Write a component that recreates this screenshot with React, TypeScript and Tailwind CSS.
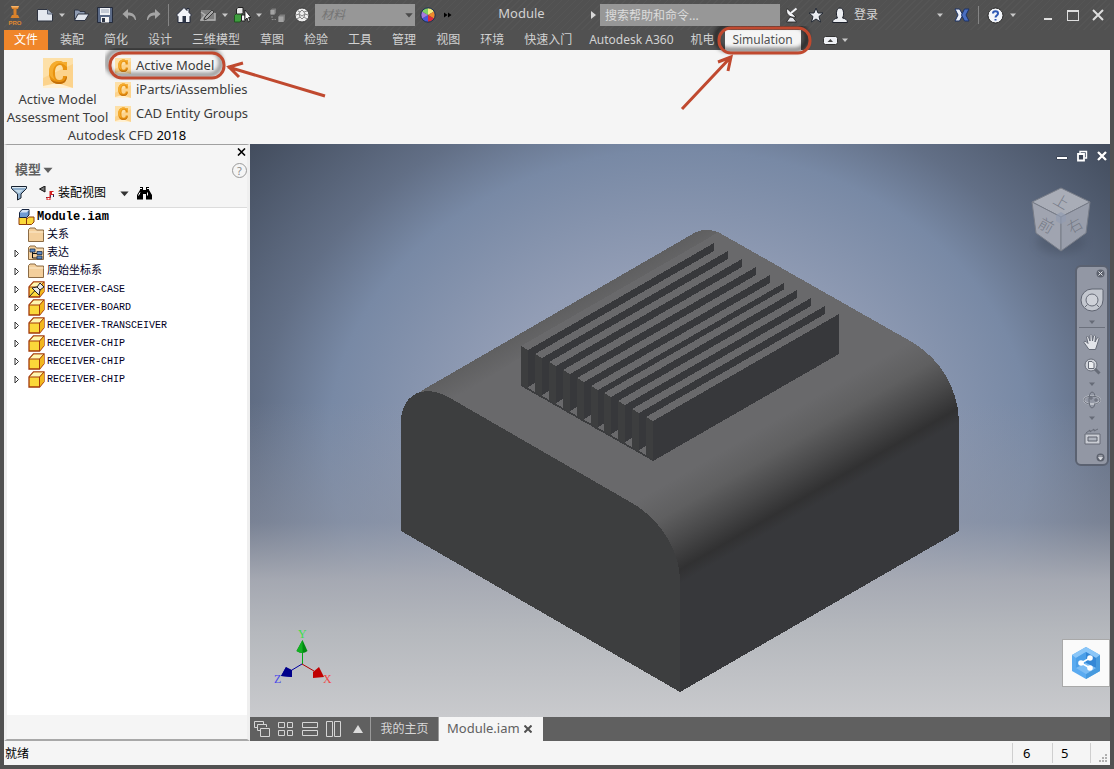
import { ReactNode } from "react";

const HATCH =
  "bg-[repeating-linear-gradient(135deg,#515151_0px,#515151_4px,#555555_4px,#555555_5px)]";

const menuTabs = [
  "装配",
  "简化",
  "设计",
  "三维模型",
  "草图",
  "检验",
  "工具",
  "管理",
  "视图",
  "环境",
  "快速入门",
  "Autodesk A360",
  "机电",
];

interface TreeItem {
  id: number;
  label: string;
  icon: "folder" | "views" | "pinned" | "part";
  expandable: boolean;
}

const treeItems: TreeItem[] = [
  { id: 1, label: "关系", icon: "folder", expandable: false },
  { id: 2, label: "表达", icon: "views", expandable: true },
  { id: 3, label: "原始坐标系", icon: "folder", expandable: true },
  { id: 4, label: "RECEIVER-CASE", icon: "pinned", expandable: true },
  { id: 5, label: "RECEIVER-BOARD", icon: "part", expandable: true },
  { id: 6, label: "RECEIVER-TRANSCEIVER", icon: "part", expandable: true },
  { id: 7, label: "RECEIVER-CHIP", icon: "part", expandable: true },
  { id: 8, label: "RECEIVER-CHIP", icon: "part", expandable: true },
  { id: 9, label: "RECEIVER-CHIP", icon: "part", expandable: true },
];

function Caret({
  size = 8,
  className = "fill-[#c8c8c8]",
}: {
  size?: number;
  className?: string;
}) {
  return (
    <svg width={size} height={size} viewBox="0 0 8 8" className={className}>
      <path d="M1 2.5h6L4 6z" />
    </svg>
  );
}

function ToolButton({
  label,
  className = "",
  children,
}: {
  label: string;
  className?: string;
  children: ReactNode;
}) {
  return (
    <button
      type="button"
      aria-label={label}
      className={`flex h-6 shrink-0 items-center justify-center ${className}`}
    >
      {children}
    </button>
  );
}

function QuickAccess() {
  return (
    <div className="flex items-center gap-0.5">
      <ToolButton label="Inventor" className="w-[22px]">
        <svg width="16" height="22" viewBox="0 0 16 22">
          <path d="M4 2h8l-1 3H9.500v6H11l1.500 3H3.500L5 11h1.500V5H5z" fill="#d9822b" />
          <path d="M4 2h8l-1 1.500H5z" fill="#f7b469" />
          <text x="8" y="21" fontSize="6" textAnchor="middle" fill="#e08a30" fontFamily="Liberation Sans, sans-serif" fontWeight="bold">
            PRO
          </text>
        </svg>
      </ToolButton>
      <ToolButton label="新建" className="ml-1.5 w-[22px]">
        <svg width="16" height="14" viewBox="0 0 16 14">
          <path d="M0.500 1.500h10l5 4.500v7h-15z" fill="#e4e8ef" stroke="#2f3440" />
          <path d="M10.500 1.500v4.500h5" fill="#aab4c4" stroke="#5a6478" />
        </svg>
      </ToolButton>
      <ToolButton label="新建选项" className="w-2">
        <Caret />
      </ToolButton>
      <ToolButton label="打开" className="ml-0.5 w-[22px]">
        <svg width="17" height="14" viewBox="0 0 17 14">
          <path d="M1.500 12V2h4l1.500 1.500h5V6" fill="#8e9bb2" stroke="#2e3442" />
          <path d="M1.500 12.500 5 6h11l-4 6.500z" fill="#dfe4ec" stroke="#2e3442" />
        </svg>
      </ToolButton>
      <ToolButton label="保存" className="w-[22px]">
        <svg width="16" height="16" viewBox="0 0 16 16">
          <path d="M0.500 0.500h15v15h-15z" fill="#5b6a86" stroke="#252b3a" />
          <path d="M3 1h10v7H3z" fill="#eef1f5" />
          <path d="M4 3h8M4 5h8" stroke="#9aa4b5" />
          <path d="M4 10h8v5.500H4z" fill="#f3f3f3" />
          <path d="M5 11h3v4H5z" fill="#2f3747" />
        </svg>
      </ToolButton>
      <ToolButton label="撤消" className="w-[22px]">
        <svg width="15" height="12" viewBox="0 0 15 12">
          <path d="M6 0 0.500 5 6 10V6.500c4 0 5.500 1 7 4.500h1C14 6 11 3.500 6 3.500z" fill="#a5a5a5" />
        </svg>
      </ToolButton>
      <ToolButton label="恢复" className="w-[22px]">
        <svg width="15" height="12" viewBox="0 0 15 12">
          <path d="m9 0 5.500 5L9 10V6.500C5 6.500 3.500 7.500 2 11H1C1 6 4 3.500 9 3.500z" fill="#a5a5a5" />
        </svg>
      </ToolButton>
      <span className="mx-0.5 h-[22px] w-px bg-[#858585]" />
      <ToolButton label="主页" className="w-[22px]">
        <svg width="16" height="16" viewBox="0 0 16 16">
          <path d="M8 0.500 0.500 8l1.500 1.500V15.500h12V9.500L15.500 8 13 5.500V1.500h-2v2z" fill="#f2f4f8" stroke="#23293a" />
          <path d="M6.500 9h3.500v6.500H6.500z" fill="#2d3546" />
        </svg>
      </ToolButton>
      <ToolButton label="草图" className="w-[22px]">
        <svg width="16" height="15" viewBox="0 0 16 15">
          <path d="M1 2h11l3 3v8H1z" fill="#7f7f7f" />
          <path d="M1 4l4 3-4 5h14V5" stroke="#b0b0b0" strokeWidth="1.500" fill="none" />
          <path d="m5 9 7-7 2 2-7 7-3 1z" fill="#a8a8a8" stroke="#3c3c3c" />
        </svg>
      </ToolButton>
      <ToolButton label="草图选项" className="w-2">
        <Caret />
      </ToolButton>
      <ToolButton label="选择" className="w-[22px]">
        <svg width="17" height="16" viewBox="0 0 17 16">
          <path d="m0.500 8.500 2-2H8v6l-2 2.500H0.500z" fill="#3f9f3f" stroke="#1e571e" />
          <path d="M2.500 2 4 0.500h5v5L7.500 7h-5z" fill="#e8e8e8" stroke="#222" />
          <path d="M7.500 8H11v6H7.500z" fill="#f4f4f4" stroke="#222" />
          <path d="M11 3v10l2-2 1.500 4 1.500-1-1.500-3.500H17z" fill="#fff" stroke="#111" strokeWidth="0.800" />
        </svg>
      </ToolButton>
      <ToolButton label="选择选项" className="w-2">
        <Caret />
      </ToolButton>
      <ToolButton label="零部件" className="ml-0.5 w-[22px]">
        <svg width="16" height="15" viewBox="0 0 16 15">
          <path d="m0.500 2 1.500-1.500h4V5L4.500 6.500h-4z" fill="#7c7c7c" />
          <path d="m8.500 8.500 1.500-2h5V12l-1.500 2h-5z" fill="#7c7c7c" />
          <path d="M0.500 2h4v4.500h-4zM8.500 8.500h5V14h-5z" fill="#a3a3a3" />
          <path d="M2 8v3.500h4" fill="none" stroke="#8a8a8a" strokeDasharray="2 1" />
        </svg>
      </ToolButton>
      <ToolButton label="外观" className="w-[22px]">
        <svg width="16" height="16" viewBox="0 0 16 16">
          <circle cx="8" cy="8" r="7" fill="#ececec" stroke="#3b3b3b" />
          <path d="M4 4l2 1 2-2 2 2 3-1M2 8l3-1 3 2 3-2 3 1M3 12l3-2 2 2 2-2 3 2M6 5 5 7l1 3M10 5l1 2-1 3" fill="none" stroke="#858585" />
        </svg>
      </ToolButton>
      <div className="relative">
        <select
          aria-label="材料"
          className="block h-[22px] w-[100px] appearance-none bg-[#979797] px-1.5 text-xs text-[#747474] italic"
        >
          <option>材料</option>
        </select>
        <span className="pointer-events-none absolute top-1.5 right-px">
          <Caret size={10} className="fill-[#4a4a4a]" />
        </span>
      </div>
      <ToolButton label="颜色" className="w-[22px]">
        <svg width="16" height="16" viewBox="0 0 16 16">
          <path d="M8 8V1a7 7 0 0 1 6 3.500z" fill="#f3ec7d" />
          <path d="M8 8l6-3.500a7 7 0 0 1 0 7z" fill="#f08a2c" />
          <path d="M8 8l6 3.500A7 7 0 0 1 8 15z" fill="#dc2b3d" />
          <path d="M8 8v7a7 7 0 0 1-6-3.500z" fill="#4a56d8" />
          <path d="M8 8l-6 3.500a7 7 0 0 1 0-7z" fill="#a57ae0" />
          <path d="M8 8 2 4.500A7 7 0 0 1 8 1z" fill="#7fd163" />
          <circle cx="8" cy="8" r="7.200" fill="none" stroke="#1e3355" />
        </svg>
      </ToolButton>
      <ToolButton label="更多" className="w-3.5">
        <svg width="8" height="6" viewBox="0 0 8 6">
          <path d="M0 0.500 3.500 3 0 5.500zM4 0.500 7.500 3 4 5.500z" fill="#000" />
        </svg>
      </ToolButton>
    </div>
  );
}

function AccountTools() {
  return (
    <div className="flex items-center gap-1 pr-0.5">
      <ToolButton label="折叠搜索" className="-mr-0.5 w-2.5">
        <svg width="5" height="8" viewBox="0 0 5 8">
          <path d="M0 0l5 4-5 4z" fill="#d8d8d8" />
        </svg>
      </ToolButton>
      <input
        type="text"
        aria-label="搜索"
        placeholder="搜索帮助和命令..."
        className="-mr-0.5 h-[22px] w-[180px] bg-[#979797] px-[5px] text-xs text-[#e8e8e8] placeholder:text-[#dcdcdc]"
      />
      <ToolButton label="通讯中心" className="w-5">
        <svg width="15" height="16" viewBox="0 0 15 16">
          <path d="M2 1.500c-2 5 3 10 9 8.500z" fill="#f4f5f8" stroke="#1e1e1e" strokeWidth="0.800" />
          <path d="m6 6 5.500-4.500" stroke="#f4f5f8" strokeWidth="2" />
          <path d="M5 10 1.500 15h10L8 10.500z" fill="#dfe2e8" stroke="#1e1e1e" strokeWidth="0.800" />
        </svg>
      </ToolButton>
      <ToolButton label="收藏夹" className="w-5">
        <svg width="16" height="16" viewBox="0 0 16 16">
          <path d="m8 1 2 5h5l-4 3.500 1.500 5.500L8 12l-4.500 3L5 9.500 1 6h5z" fill="#e9ebf0" stroke="#222833" />
        </svg>
      </ToolButton>
      <ToolButton label="账户" className="w-5">
        <svg width="16" height="16" viewBox="0 0 16 16">
          <path d="M0.500 15.500c0-3 2.500-4 5-4.500C4 9 3.500 1 8 1s4 8 2.500 10c2.500 0.500 5 1.500 5 4.500z" fill="#eceef2" stroke="#1e222c" />
        </svg>
      </ToolButton>
      <button type="button" className="h-6 w-[78px] text-left text-xs text-[#d5d5d5]">
        登录
      </button>
      <ToolButton label="登录选项" className="w-2">
        <Caret />
      </ToolButton>
      <ToolButton label="Exchange" className="ml-1 w-5">
        <svg width="16" height="14" viewBox="0 0 16 14">
          <path d="M1 1h4.500L9 7l-3.500 6H1l3-6z" fill="#eef1f8" stroke="#1d3367" />
          <path d="M15 1h-4.500L7.500 7l3 6H15l-3-6z" fill="#4a6fc2" stroke="#1d3367" />
        </svg>
      </ToolButton>
      <span className="mx-0.5 h-[18px] w-px bg-[#858585]" />
      <ToolButton label="帮助" className="w-5">
        <svg width="17" height="17" viewBox="0 0 17 17">
          <circle cx="8.500" cy="8.500" r="7.500" fill="#f3f5f9" stroke="#2a2a2a" />
          <path d="M6 6.500C6 3.500 11 3.500 11 6.500 11 8.500 8.500 8.500 8.500 10.500M8.500 12v1.500" fill="none" stroke="#2e58b4" strokeWidth="2" />
        </svg>
      </ToolButton>
      <ToolButton label="帮助选项" className="w-2">
        <Caret />
      </ToolButton>
      <div className="ml-4 flex gap-1">
        <ToolButton label="最小化" className="w-[21px]">
          <span className="mt-2 h-0.5 w-2 bg-[#dedede]" />
        </ToolButton>
        <ToolButton label="最大化" className="w-[21px]">
          <span className="h-[11px] w-3 border border-t-2 border-[#dedede]" />
        </ToolButton>
        <ToolButton label="关闭" className="w-[21px]">
          <svg width="12" height="12" viewBox="0 0 12 12">
            <path d="m1 1 10 10M11 1 1 11" stroke="#dedede" strokeWidth="2" />
          </svg>
        </ToolButton>
      </div>
    </div>
  );
}

// Hand-drawn markers that sit on top of the control they point at
function SimulationMark() {
  return (
    <svg width="132" height="90" viewBox="0 0 132 90" className="pointer-events-none absolute -top-1 -left-[45px] z-20">
      <g className="[filter:drop-shadow(-3px_-3px_2px_rgba(0,0,0,0.7))]">
        <rect x="39" y="2" width="91" height="25" rx="12" fill="none" stroke="#c0492f" strokeWidth="3" />
      </g>
      <path d="M2 83 50 32M38 36 51 31 48 45" fill="none" stroke="#c0492f" strokeWidth="3" />
    </svg>
  );
}

function ActiveModelMark() {
  return (
    <svg width="230" height="54" viewBox="0 0 230 54" className="pointer-events-none absolute -top-1.5 -left-1.5 z-10">
      <g className="[filter:drop-shadow(-3px_-3px_2px_rgba(0,0,0,0.6))]">
        <rect x="5" y="5" width="114" height="25" rx="12" fill="none" stroke="#c0492f" strokeWidth="3" />
      </g>
      <path d="M220 48 123 19M138 15 124 19 134 29" fill="none" stroke="#c0492f" strokeWidth="3" />
    </svg>
  );
}

function MenuBar() {
  return (
    <nav className="flex h-5 items-stretch text-xs text-[#d2d2d2]">
      <button type="button" className="mr-0.5 w-11 bg-[#f0862a] leading-5 text-white">
        文件
      </button>
      {menuTabs.map((tab) => (
        <button
          key={tab}
          type="button"
          className={`leading-5 whitespace-nowrap ${tab.startsWith("Autodesk") ? "px-[7px]" : "px-2.5"}`}
        >
          {tab}
        </button>
      ))}
      <div className="relative">
        <button type="button" className="h-full w-[76px] bg-[#f5f5f5] leading-5 text-[#505050]">
          Simulation
        </button>
        <SimulationMark />
      </div>
      <ToolButton label="最小化功能区" className="ml-5 w-5 self-center">
        <svg width="15" height="9" viewBox="0 0 15 9">
          <rect x="0.500" y="0.500" width="14" height="8" rx="2" fill="#eef0f4" stroke="#333" />
          <path d="M4.500 6h5.500L7.500 3z" fill="#444" />
        </svg>
      </ToolButton>
      <ToolButton label="功能区选项" className="w-2 self-center">
        <Caret />
      </ToolButton>
    </nav>
  );
}

function CfdIcon({ size }: { size: number }) {
  return (
    <svg width={size} height={size} viewBox="0 0 30 30" className="shrink-0">
      <path d="M0 0h30v30H0z" fill="#fcd38c" />
      <path d="M0 0h30v6L0 20z" fill="#fde0a8" />
      <path d="M0 28 14 25 30 30H0z" fill="#fff0d2" />
      <path d="M24 4v8h-4c0-3-1-5-3-5-4 0-5 4-5 8s1 7 4 7c3 0 4-1 4-4h4c0 5-3 8-8 8-6 0-10-4-10-11S10 3 16 3c2 0 3 .5 4 1.500z" fill="#e8920f" />
      <path d="M24 4v5c-4-4-8-5-11-2-4 4-4 10-1 15-3-2-6-4-6-8C6 7 10 3 16 3c2 0 3 .5 4 1.500z" fill="#f5ac2e" />
      <path d="M16 24c4 0 6-1 7-5h1c-1 5-3 7-8 7-4 0-7-2-9-5 3 2 5 3 9 3z" fill="#c26e08" />
    </svg>
  );
}

function Ribbon() {
  const commands = ["Active Model", "iParts/iAssemblies", "CAD Entity Groups"];
  return (
    <div className="h-[94px] bg-[#f5f5f5] text-[13px] text-[#3c3c3c]">
      <div className="flex w-[246px] flex-col">
        <div className="flex">
          <button type="button" className="flex w-[107px] flex-col items-center pt-2 leading-[18px] whitespace-nowrap">
            <CfdIcon size={30} />
            <span className="mt-0.5">Active Model</span>
            <span>Assessment Tool</span>
          </button>
          <ul className="pt-1">
            {commands.map((name, i) => (
              <li key={name} className="relative h-6">
                <button type="button" className="flex h-6 items-center gap-[5px] pl-1 whitespace-nowrap">
                  <CfdIcon size={16} />
                  {name}
                </button>
                {i === 0 && <ActiveModelMark />}
              </li>
            ))}
          </ul>
        </div>
        <p className="text-center leading-[18px]">
          Autodesk CFD <span className="text-black">2018</span>
        </p>
      </div>
    </div>
  );
}

function TreeIcon({ kind }: { kind: TreeItem["icon"] }) {
  if (kind === "folder" || kind === "views") {
    return (
      <svg width="17" height="16" viewBox="0 0 17 16" className="shrink-0">
        <path d="M0.500 14.500v-12l1.500-1.500h5l1.500 2h7v11.500z" fill="#f3cf9c" stroke="#8b6b45" />
        <path d="M1 5h14.500" stroke="#fdeacb" />
        {kind === "views" && (
          <>
            <path d="M4.500 6v7H10M5 8.500h4" fill="none" stroke="#111" />
            <path d="M2 4h5v3H2zM9 6.500h5v3H9zM9 11h5v3H9z" fill="#5d8ac4" stroke="#1b2e4d" strokeWidth="0.800" />
          </>
        )}
      </svg>
    );
  }
  return (
    <svg width="17" height="17" viewBox="0 0 17 17" className="shrink-0">
      <path d="M1 6 5.500 1h10.500v9.500L11.500 16H1z" fill="#fbd83a" stroke="#a33a0a" strokeWidth="1.300" />
      <path d="M1.500 6 5.800 1.600h9.500L11.500 6z" fill="#fff6b0" />
      <path d="M11.500 6v10L16 10.500V1z" fill="#f2b71c" />
      <path d="M1 6h10.500v10M11.500 6 16 1" fill="none" stroke="#a33a0a" />
      {kind === "pinned" && (
        <>
          <path d="M1 16 7 9.500" stroke="#222" />
          <path d="m4 7 5-1 3-4 4 4-4 3-1 5z" fill="#e9e9e9" stroke="#222" />
          <path d="m9 6 3 3" stroke="#222" />
        </>
      )}
    </svg>
  );
}

function ModelBrowser() {
  return (
    <aside className="flex w-[246px] shrink-0 flex-col border-x-[3px] border-t border-b-2 border-x-[#efefef] border-t-[#a0a0a0] border-b-[#a8a8a8] bg-[#f5f5f5]">
      <div className="flex h-3.5 items-center justify-end pr-px">
        <button type="button" aria-label="关闭面板">
          <svg width="9" height="8" viewBox="0 0 9 8">
            <path d="m1 0.500 7 7M8 0.500l-7 7" stroke="#000" strokeWidth="1.600" />
          </svg>
        </button>
      </div>
      <div className="flex h-[22px] items-center justify-between pl-2">
        <button type="button" className="flex items-center gap-px text-[13px] font-bold text-[#606060]">
          模型
          <Caret size={12} className="fill-[#606060]" />
        </button>
        <button type="button" aria-label="帮助" className="size-[15px] rounded-full border border-[#9a9a9a] text-center text-[11px] leading-[13px] text-[#8a8a8a]">
          ?
        </button>
      </div>
      <div className="flex h-[27px] items-center border-b border-[#dcdcdc] pb-0.5 pl-1">
        <ToolButton label="过滤器">
          <svg width="16" height="15" viewBox="0 0 16 15">
            <path d="M0.500 0.500h15v2L10 8v4l-3.500 2V8L0.500 2.500z" fill="#8eaecb" stroke="#16202e" />
            <path d="M1 1h14v1H1z" fill="#dbe8f2" />
            <path d="M3 4h9L8 7.500z" fill="#c5dbea" />
          </svg>
        </ToolButton>
        <button type="button" className="ml-3 flex items-center gap-[3px] text-xs text-black">
          <svg width="16" height="15" viewBox="0 0 16 15">
            <path d="M0.500 3 6 0v6z" fill="#777" stroke="#111" />
            <path d="M7 11.500h4.500V7h3v4" fill="none" stroke="#1c2b5e" />
            <path d="M10.500 5h4v4h-3v5h-4v-3h3z" fill="#d42020" />
            <path d="M13 6h2v2h-2zM8.500 12h2v1.500h-2z" fill="#fff" />
          </svg>
          装配视图
          <span className="ml-2.5">
            <Caret size={11} className="fill-[#333]" />
          </span>
        </button>
        <ToolButton label="查找" className="ml-[7px]">
          <svg width="15" height="14" viewBox="0 0 15 14">
            <path d="M3 1h3v3h3V1h3v3l3 5v4.500H9V8H6v5.500H0V9l3-5z" fill="#000" />
            <path d="M1.500 9.500 3 6.500M10.500 9.500V6.500M3 2.500h2M10 2.500h2" stroke="#fff" />
          </svg>
        </ToolButton>
      </div>
      <div className="mb-6 grow bg-white text-[10px] text-[#00001e] [font-family:'Liberation_Mono','Noto_Sans_CJK_SC',monospace]">
        <div className="flex h-[18px] items-center gap-0.5 pl-[11px] text-xs font-bold text-black">
          <svg width="17" height="17" viewBox="0 0 17 17">
            <path d="M1 8.500h7.500v7H1zM8.500 10.500l2-2.500H16v5l-2.500 2.500h-5z" fill="#fbd83a" stroke="#8e3b0c" />
            <path d="M1.500 3.500 4 0.500h7V6L8.500 8.500h-7z" fill="#6f9bd4" stroke="#14233f" />
            <path d="M2 3.500h6.500L11 1H4.500z" fill="#d5e3f6" />
          </svg>
          Module.iam
        </div>
        <ul>
          {treeItems.map((item) => (
            <li key={item.id} className="flex h-[18px] items-center pl-[7px]">
              <button
                type="button"
                aria-label={`展开 ${item.label}`}
                disabled={!item.expandable}
                className="flex h-[18px] w-3.5 items-center"
              >
                {item.expandable && (
                  <svg width="6" height="9" viewBox="0 0 6 9">
                    <path d="M1 1v7l3.500-3.500z" fill="#fff" stroke="#333" />
                  </svg>
                )}
              </button>
              <TreeIcon kind={item.icon} />
              <span className={item.id < 4 ? "ml-0.5 text-[11px]" : "ml-0.5"}>{item.label}</span>
            </li>
          ))}
        </ul>
      </div>
    </aside>
  );
}

const FIN_COUNT = 10;
const finOffsets = Array.from({ length: FIN_COUNT }, (_, i) => ({
  x: 521 + Math.round(i * 13.9),
  y: 346 + Math.round(i * 7.9),
}));

function Heatsink() {
  return (
    <g>
      {finOffsets.map(({ x, y }, i) => {
        const last = i === FIN_COUNT - 1;
        const depth = last ? 40 : 37;
        return (
          <g key={x}>
            <path d={`M${x} ${y}l186-107 7 4-186 107z`} fill="#69696b" />
            <path d={`M${x + 7} ${y + 4}l186-107v${depth}l-186 107z`} fill="#37383b" />
            <path d={`M${x} ${y}l7 4v40l-7-4z`} fill="#3d3e3f" />
            {!last && <path d={`M${x + 7} ${y + 41}l7-4v7z`} fill="#69696b" />}
          </g>
        );
      })}
      <path d="M521 384 653 459v2L521 386z" fill="#3b3c3e" />
    </g>
  );
}

function ModelScene() {
  return (
    <svg viewBox="250 144 860 573" className="absolute inset-0 size-full">
      <defs>
        <linearGradient id="fillet" gradientUnits="userSpaceOnUse" x1="634" y1="502" x2="681" y2="583">
          <stop offset="0" stopColor="#69696b" />
          <stop offset="0.300" stopColor="#5f5f60" />
          <stop offset="0.600" stopColor="#484849" />
          <stop offset="0.870" stopColor="#313132" />
          <stop offset="1" stopColor="#37383b" />
        </linearGradient>
        <linearGradient id="backFillet" gradientUnits="userSpaceOnUse" x1="550" y1="316" x2="562" y2="337">
          <stop offset="0" stopColor="#5f5f60" />
          <stop offset="1" stopColor="#69696b" />
        </linearGradient>
      </defs>
      <g shapeRendering="crispEdges">
        <path d="M421 391 696 232Q706 228 718 232L912 342C940 359 957 386 959 420V531L680 692 500 560z" fill="url(#fillet)" />
        <path d="M421 391 696 232Q706 228 718 232L450 402z" fill="url(#backFillet)" />
        <path d="M401 531V420C402 396 422 382 450 398L632 503C660 519 680 550 680 581V692z" fill="#3d3e3f" />
        <Heatsink />
      </g>
    </svg>
  );
}

function AxisTriad() {
  return (
    <svg width="60" height="60" viewBox="272 628 60 60" className="absolute bottom-[29px] left-[22px]">
      <path d="M302.500 664v-14" stroke="#00a818" />
      <path d="m302.500 640-6 11q6 4 11 0z" fill="#008a10" />
      <path d="m302.500 640-6 11q3 2 6 2z" fill="#12b022" />
      <path d="m302 664-10 6" stroke="#0000a0" />
      <path d="m281 676 5-9 6 10z" fill="#0000a8" />
      <path d="m281 676 5-9 6 3v7z" fill="#00008a" />
      <path d="m302 664 12 7" stroke="#b00000" />
      <path d="m324 677-5-10-6 5v6z" fill="#c00000" />
      <g fontFamily="Liberation Serif, serif" fontSize="12">
        <text x="298" y="638" fill="#3be04a">Y</text>
        <text x="274" y="683" fill="#4a4ae8">Z</text>
        <text x="323" y="683" fill="#f04848">X</text>
      </g>
    </svg>
  );
}

function ViewCube() {
  return (
    <svg width="70" height="76" viewBox="1026 184 70 76" className="absolute top-10 right-3.5">
      <ellipse cx="1061" cy="242" rx="24" ry="12" fill="#3f4858" opacity="0.350" className="[filter:blur(4px)]" />
      <g stroke="#777c87" strokeLinejoin="round">
        <path d="m1061 188 29 14-29 15-29-15z" fill="#a9adb7" />
        <path d="m1032 202 29 15v34l-25-18z" fill="#a0a4b0" />
        <path d="m1090 202-29 15v34l25-18z" fill="#999eab" />
      </g>
      <path d="m1061 212 5 3v6l-5 3-5-3v-6z" fill="#919bb0" opacity="0.700" />
      <g fill="#757a86" textAnchor="middle" fontSize="15" fontFamily="Noto Sans CJK SC, sans-serif" fontWeight="300">
        <text transform="rotate(30 1061 202)" x="1061" y="207">上</text>
        <text transform="rotate(30 1046 226)" x="1046" y="231">前</text>
        <text transform="rotate(-30 1075 226)" x="1075" y="231">右</text>
      </g>
    </svg>
  );
}

function NavigationBar() {
  return (
    <div className="absolute top-[121px] right-px flex w-[34px] flex-col items-center rounded-md border-2 border-[#5b6271] bg-[#9297a4] pt-0.5 pb-0.5">
      <button type="button" aria-label="关闭导航栏" className="mr-0.5 self-end">
        <svg width="9" height="9" viewBox="0 0 9 9" className="block">
          <circle cx="4.500" cy="4.500" r="4" fill="#5d626e" />
          <path d="m2.500 2.500 4 4M6.500 2.500l-4 4" stroke="#dfe1e6" />
        </svg>
      </button>
      <ToolButton label="控制盘" className="mt-2.5">
        <svg width="24" height="24" viewBox="0 0 24 24">
          <path d="M12 1h9.500a1.500 1.500 0 0 1 1.500 1.500V12A11 11 0 1 1 12 1z" fill="#c3c7cf" stroke="#5f6471" />
          <circle cx="12" cy="12" r="6" fill="#cfd2d9" stroke="#666b77" />
          <path d="m5 19 2.500-2.500M19 19l-2.500-2.500" stroke="#666b77" />
        </svg>
      </ToolButton>
      <div className="mt-1 flex h-3 w-[26px] items-center justify-center border-b border-[#6c717d]">
        <Caret className="fill-[#666b77]" />
      </div>
      <ToolButton label="平移" className="mt-0.5">
        <svg width="18" height="18" viewBox="0 0 18 18">
          <path d="M6 16.500 1 9.500q0-2 2-1l2 2L3.500 4q1-2 2 0l1.500 4L7 2.500q1-2 2 0L9.500 8l1-5q1-1.500 2 0L12 9l2-4q1.500-1 2 0.500L14 12l-1.500 4.500z" fill="#e2e4e9" stroke="#666b77" />
        </svg>
      </ToolButton>
      <ToolButton label="缩放">
        <svg width="17" height="17" viewBox="0 0 17 17">
          <path d="m10.500 10.500 5 5" stroke="#666b77" strokeWidth="3" />
          <circle cx="7" cy="7" r="6" fill="#d0d3da" stroke="#666b77" />
          <path d="M4.500 3.500h3.500l2 2v5h-5.500z" fill="#eceef1" stroke="#666b77" />
        </svg>
      </ToolButton>
      <Caret className="mt-0.5 fill-[#666b77]" />
      <ToolButton label="动态观察">
        <svg width="18" height="18" viewBox="0 0 18 18">
          <ellipse cx="9" cy="9" rx="8" ry="4" fill="none" stroke="#bfc3cb" strokeWidth="2" />
          <path d="M9 1C5 1 5 17 9 17M9 1c2 0 3 3 3 5M12 13q-1 4-3 4M1 9c0-5 16-5 16 0 0 3-4 4-6 4M1 9c0 2 3 4 6 4M11 9h4M13 7v4M8 5v4M6 7h4" fill="none" stroke="#666b77" />
        </svg>
      </ToolButton>
      <Caret className="mt-0.5 fill-[#666b77]" />
      <ToolButton label="查看对象" className="mt-0.5">
        <svg width="17" height="17" viewBox="0 0 17 17">
          <path d="m2 5 4-3v2l4-3v2l4-2" fill="none" stroke="#666b77" />
          <path d="M1 6h15v10H1z" fill="#c9ccd3" stroke="#666b77" />
          <path d="M4 9h9v4H4z" fill="#aeb3bd" stroke="#5c616d" />
        </svg>
      </ToolButton>
      <button type="button" aria-label="自定义" className="mt-[5px] mr-0.5 self-end">
        <svg width="9" height="9" viewBox="0 0 9 9" className="block">
          <circle cx="4.500" cy="4.500" r="4" fill="#5d626e" />
          <path d="M2.500 3h4M2.500 4.500h4l-2 2.500z" stroke="#dfe1e6" fill="#dfe1e6" strokeWidth="0.800" />
        </svg>
      </button>
    </div>
  );
}

function Viewport() {
  return (
    <main className="relative min-h-[380px] grow overflow-hidden bg-[linear-gradient(180deg,rgba(150,156,170,0)_0%,rgba(150,156,170,0)_45%,rgba(144,150,165,0.550)_66%,rgba(168,171,180,0.950)_76%,#b5b8bd_85%,#c9cacd_100%),radial-gradient(ellipse_60%_75%_at_50%_52%,#9ca7bb_0%,#929db5_40%,#7889a5_68%,#626f86_82%,#434d5e_108%)]">
      <ModelScene />
      <AxisTriad />
      <div className="absolute top-1.5 right-0.5 flex gap-2">
        <button type="button" aria-label="最小化文档">
          <svg width="12" height="12" viewBox="0 0 12 12">
            <path d="M0.500 6.500h11v3H0.500z" fill="#fff" stroke="#3c4556" />
          </svg>
        </button>
        <button type="button" aria-label="还原文档">
          <svg width="12" height="12" viewBox="0 0 12 12">
            <path d="M4 3V1.500h6.500V8H9" fill="none" stroke="#fff" strokeWidth="1.400" />
            <path d="M2 4h6v6.500H2z" fill="#3c4556" stroke="#fff" strokeWidth="1.800" />
          </svg>
        </button>
        <button type="button" aria-label="关闭文档">
          <svg width="12" height="12" viewBox="0 0 12 12">
            <path d="m2 2 8 8M10 2l-8 8" stroke="#3c4556" strokeWidth="4" />
            <path d="m2 2 8 8M10 2l-8 8" stroke="#fff" strokeWidth="2.400" />
          </svg>
        </button>
      </div>
      <ViewCube />
      <NavigationBar />
      <button
        type="button"
        aria-label="共享"
        className="absolute right-0 bottom-[30px] flex size-12 items-center justify-center border border-[#a9a9a9] bg-[#fafafa]"
      >
        <svg width="30" height="34" viewBox="0 0 30 34">
          <path d="M15 1 29 9v16l-14 8L1 25V9z" fill="#5aaaf0" />
          <path d="M15 1 29 9l-4 3-10-6L5 12 1 9z" fill="#8ac6f8" />
          <path d="M29 9v16l-14 8v-5l10-6V12z" fill="#479ade" />
          <path d="M15 6 5 12v10l10-5z" fill="#4b9fe8" />
          <path d="m15 6 10 6v10l-10-5z" fill="#3487d6" />
          <path d="m5 22 10-5 10 5-10 6z" fill="#7bbcf4" />
          <path d="m19 12-9 5 9 5" fill="none" stroke="#fff" strokeWidth="1.500" />
          <g fill="#fff">
            <circle cx="19" cy="12" r="2.800" />
            <circle cx="10" cy="17" r="2.800" />
            <circle cx="19" cy="22" r="2.800" />
          </g>
        </svg>
      </button>
    </main>
  );
}

function DocumentTabs() {
  return (
    <div className="flex h-6 shrink-0 bg-[#606060] text-[13px] text-[#d8d8d8]">
      <div className="flex w-[121px] items-center gap-2 border-r border-[#9a9a9a] pl-1">
        <button type="button" aria-label="层叠">
          <svg width="16" height="16" viewBox="0 0 16 16" fill="none" stroke="#d5d5d5">
            <path d="M3 6.500H0.500v-6h9V3M6 9.500H3.500v-6h9V6" />
            <path d="M6.500 7.500h9v8h-9z" />
          </svg>
        </button>
        <button type="button" aria-label="平铺">
          <svg width="16" height="16" viewBox="0 0 16 16" fill="none" stroke="#d5d5d5">
            <path d="M0.500 1.500h6v5h-6zM9.500 1.500h5v5h-5zM0.500 9.500h6v5h-6zM9.500 9.500h5v5h-5z" />
          </svg>
        </button>
        <button type="button" aria-label="水平排列">
          <svg width="16" height="16" viewBox="0 0 16 16" fill="none" stroke="#d5d5d5">
            <path d="M0.500 1.500h15v5h-15zM0.500 9.500h15v5h-15z" />
          </svg>
        </button>
        <button type="button" aria-label="垂直排列">
          <svg width="16" height="16" viewBox="0 0 16 16" fill="none" stroke="#d5d5d5">
            <path d="M0.500 0.500h6v15h-6zM8.500 0.500h6v15h-6z" />
          </svg>
        </button>
        <button type="button" aria-label="文档列表">
          <svg width="16" height="16" viewBox="0 0 16 16">
            <path d="M8 4 13 12H3z" fill="#dcdcdc" />
          </svg>
        </button>
      </div>
      <button type="button" className="w-[68px] border-r border-[#9a9a9a] text-xs whitespace-nowrap">
        我的主页
      </button>
      <div className="flex w-[104px] items-center gap-1 bg-[#f5f5f5] pl-2 text-[#606060]">
        <button type="button">Module.iam</button>
        <button type="button" aria-label="关闭 Module.iam">
          <svg width="8" height="8" viewBox="0 0 8 8">
            <path d="m0.500 0.500 7 7M7.500 0.500l-7 7" stroke="#505050" strokeWidth="2" />
          </svg>
        </button>
      </div>
    </div>
  );
}

function StatusBar() {
  return (
    <footer className="flex h-6 shrink-0 items-center bg-[#f5f5f5] text-xs text-black">
      <span className="grow pt-px pl-px">就绪</span>
      <span className="h-5 w-10 border-l border-[#cfcfcf] pl-2.5 text-[13px] leading-5">6</span>
      <span className="h-5 w-[38px] border-l border-[#cfcfcf] pl-2 text-[13px] leading-5">5</span>
      <span className="flex h-5 w-5 items-end justify-end border-l border-[#cfcfcf] pr-0.5">
        <svg width="9" height="9" viewBox="0 0 9 9" fill="#b0b0b0">
          <path d="M6 0h2v2H6zM3 3h2v2H3zM6 3h2v2H6zM0 6h2v2H0zM3 6h2v2H3zM6 6h2v2H6z" />
        </svg>
      </span>
    </footer>
  );
}

export default function App() {
  return (
    <div className="flex min-h-screen flex-col bg-[#515151] px-1 pb-1 [font-family:'Noto_Sans','Noto_Sans_CJK_SC',sans-serif]">
      <header>
        <div className={`flex h-[30px] items-center ${HATCH}`}>
          <QuickAccess />
          <h1 className="grow pb-0.5 text-center text-[13px] text-[#d2d2d2]">Module</h1>
          <AccountTools />
        </div>
        <MenuBar />
      </header>
      <Ribbon />
      <div className="flex grow">
        <ModelBrowser />
        <div className="flex min-w-0 grow flex-col">
          <Viewport />
          <DocumentTabs />
        </div>
      </div>
      <StatusBar />
    </div>
  );
}
